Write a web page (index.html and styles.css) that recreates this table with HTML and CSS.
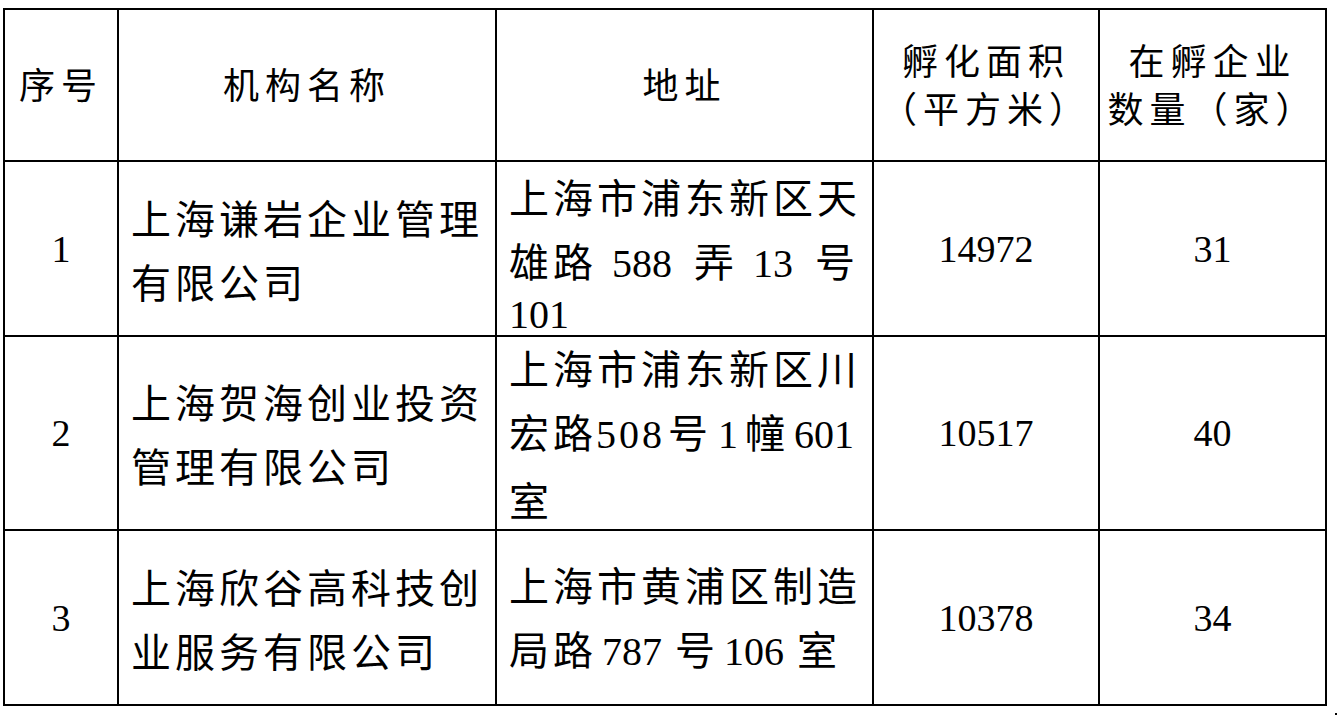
FILE: index.html
```html
<!DOCTYPE html>
<html lang="zh-CN">
<head>
<meta charset="utf-8">
<title>孵化机构</title>
<link rel="stylesheet" href="styles.css">
</head>
<body>
<div class="table">
  <div class="cell head"><div class="hd">序号</div></div>
  <div class="cell head"><div class="hd">机构名称</div></div>
  <div class="cell head"><div class="hd">地址</div></div>
  <div class="cell head"><div class="hd">孵化面积<br>（平方米）</div></div>
  <div class="cell head"><div class="hd">在孵企业<br>数量（家）</div></div>

  <div class="cell center"><span class="num">1</span></div>
  <div class="cell left"><div class="txt">上海谦岩企业管理有限公司</div></div>
  <div class="cell left">
    <div class="addr">
      <div class="ln">上海市浦东新区天</div>
      <div class="ln">雄路<span class="anum wide">588</span>弄<span class="anum wide">13</span>号</div>
      <div class="ln short">101</div>
    </div>
  </div>
  <div class="cell center"><span class="num">14972</span></div>
  <div class="cell center"><span class="num">31</span></div>

  <div class="cell center"><span class="num">2</span></div>
  <div class="cell left"><div class="txt">上海贺海创业投资管理有限公司</div></div>
  <div class="cell left">
    <div class="addr">
      <div class="ln">上海市浦东新区川</div>
      <div class="ln">宏路<span class="anum n508">508</span>号<span class="anum n1">1</span>幢<span class="anum n601">601</span></div>
      <div class="ln">室</div>
    </div>
  </div>
  <div class="cell center"><span class="num">10517</span></div>
  <div class="cell center"><span class="num">40</span></div>

  <div class="cell center"><span class="num">3</span></div>
  <div class="cell left"><div class="txt">上海欣谷高科技创业服务有限公司</div></div>
  <div class="cell left">
    <div class="addr">
      <div class="ln">上海市黄浦区制造</div>
      <div class="ln">局路<span class="anum sp">787</span>号<span class="anum sp">106</span>室</div>
    </div>
  </div>
  <div class="cell center"><span class="num">10378</span></div>
  <div class="cell center"><span class="num">34</span></div>
</div>
<div class="dot"></div>
</body>
</html>
```

FILE: styles.css
```css
html, body {
  margin: 0;
  padding: 0;
  background: #ffffff;
}

body {
  color: #000000;
  font-family: "Noto Sans CJK SC", "Liberation Sans", sans-serif;
  font-weight: 400;
}

.table {
  display: grid;
  grid-template-columns: 114px 378px 377px 226px 227px;
  grid-template-rows: 152px 175px 194px 175px;
  width: 1324px;
  margin: 8px 0 0 3px;
  border-left: 2px solid #000;
  border-top: 2px solid #000;
  box-sizing: border-box;
}

.cell {
  box-sizing: border-box;
  border-right: 2px solid #000;
  border-bottom: 2px solid #000;
  display: flex;
  align-items: center;
  min-width: 0;
}

.head {
  justify-content: center;
  text-align: center;
}

.hd {
  font-size: 36px;
  line-height: 48px;
  letter-spacing: 6px;
  padding-bottom: 4px;
  white-space: nowrap;
}

.center {
  justify-content: center;
}

.left {
  justify-content: flex-start;
  padding: 0 8px 0 12px;
}

.txt {
  font-size: 40px;
  line-height: 64px;
  letter-spacing: 4px;
  width: 100%;
}

.addr {
  font-size: 40px;
  line-height: 64px;
  letter-spacing: 4px;
  width: 100%;
}

.ln {
  white-space: nowrap;
}

.short {
  font-family: "Liberation Serif", serif;
  font-size: 40px;
  line-height: 37px;
  letter-spacing: 0;
}

.num {
  font-family: "Liberation Serif", serif;
  font-size: 38px;
  line-height: 44px;
  letter-spacing: 0;
}

.anum {
  font-family: "Liberation Serif", serif;
  font-size: 40px;
  letter-spacing: 0;
}

.wide {
  margin: 0 22px 0 15px;
}

.sp {
  margin: 0 13px 0 5px;
}

.n508 {
  letter-spacing: 3px;
  margin: 0 3px 0 -1px;
}

.n1 {
  margin: 0 7px 0 6px;
}

.n601 {
  margin: 0 0 0 5px;
}

.dot {
  width: 2px;
  height: 2px;
  background: #000;
  margin: 7px 0 0 1335px;
}
```
